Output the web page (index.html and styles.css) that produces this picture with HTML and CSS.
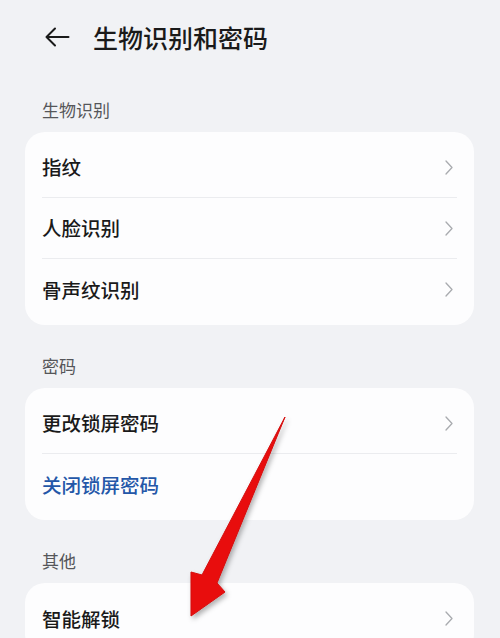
FILE: index.html
```html
<!DOCTYPE html>
<html lang="zh-CN">
<head>
<meta charset="utf-8">
<title>生物识别和密码</title>
<link rel="stylesheet" href="styles.css">
</head>
<body>
<div class="page">
  <header class="header">
    <svg class="back" width="26" height="20" viewBox="0 0 26 20">
      <path d="M11 1.5 L2.5 10 L11 18.5 M2.5 10 H24.5" fill="none" stroke="#1a1a1a" stroke-width="2" stroke-linecap="round" stroke-linejoin="round"/>
    </svg>
    <h1 class="title">生物识别和密码</h1>
  </header>

  <div class="section-label">生物识别</div>
  <div class="card">
    <div class="row"><span class="row-text">指纹</span><svg class="chev" width="8" height="15" viewBox="0 0 8 15"><path d="M1 1 L7 7.5 L1 14" fill="none" stroke="#a9abaf" stroke-width="1.3" stroke-linecap="round" stroke-linejoin="round"/></svg></div>
    <div class="row"><span class="row-text">人脸识别</span><svg class="chev" width="8" height="15" viewBox="0 0 8 15"><path d="M1 1 L7 7.5 L1 14" fill="none" stroke="#a9abaf" stroke-width="1.3" stroke-linecap="round" stroke-linejoin="round"/></svg></div>
    <div class="row"><span class="row-text">骨声纹识别</span><svg class="chev" width="8" height="15" viewBox="0 0 8 15"><path d="M1 1 L7 7.5 L1 14" fill="none" stroke="#a9abaf" stroke-width="1.3" stroke-linecap="round" stroke-linejoin="round"/></svg></div>
  </div>

  <div class="section-label">密码</div>
  <div class="card">
    <div class="row"><span class="row-text">更改锁屏密码</span><svg class="chev" width="8" height="15" viewBox="0 0 8 15"><path d="M1 1 L7 7.5 L1 14" fill="none" stroke="#a9abaf" stroke-width="1.3" stroke-linecap="round" stroke-linejoin="round"/></svg></div>
    <div class="row"><span class="row-text blue">关闭锁屏密码</span></div>
  </div>

  <div class="section-label">其他</div>
  <div class="card">
    <div class="row"><span class="row-text">智能解锁</span><svg class="chev" width="8" height="15" viewBox="0 0 8 15"><path d="M1 1 L7 7.5 L1 14" fill="none" stroke="#a9abaf" stroke-width="1.3" stroke-linecap="round" stroke-linejoin="round"/></svg></div>
  </div>

  <svg class="red-arrow" width="500" height="638" viewBox="0 0 500 638">
    <defs>
      <filter id="sh" x="-20%" y="-20%" width="140%" height="140%">
        <feDropShadow dx="2" dy="3" stdDeviation="2.5" flood-color="#000" flood-opacity="0.3"/>
      </filter>
    </defs>
    <path d="M285 417 L217 583 L225 592 L191 616 L191 572 L202 575 Z" fill="#e81010" stroke="#d40a0a" stroke-width="1" stroke-linejoin="round" filter="url(#sh)"/>
  </svg>
</div>
</body>
</html>
```

FILE: styles.css
```css
* { box-sizing: border-box; }
html, body {
  margin: 0;
  padding: 0;
  background: #f1f2f5;
}
body {
  width: 500px;
  height: 638px;
  overflow: hidden;
  font-family: "Noto Sans CJK SC", "Noto Sans", sans-serif;
  color: #1a1a1a;
}
.page {
  position: relative;
  width: 500px;
  height: 638px;
}
.header {
  height: 74px;
  display: flex;
  align-items: center;
  padding-left: 44px;
}
.back {
  display: block;
  margin-right: 23px;
}
.title {
  margin: 0;
  font-size: 25px;
  font-weight: 500;
  line-height: 30px;
  color: #1a1a1a;
}
.section-label {
  padding: 25px 42px 0;
  font-size: 17px;
  line-height: 22px;
  color: #555659;
  margin-bottom: 11px;
}
.card {
  margin: 0 26px 5px 25px;
  background: #fdfdfe;
  border-radius: 20px;
  padding: 5px 17px;
}
.row {
  height: 61px;
  display: flex;
  align-items: center;
  justify-content: space-between;
  border-bottom: 1px solid #ebecef;
}
.row:last-child {
  border-bottom: none;
}
.row-text {
  font-size: 19.5px;
  font-weight: 500;
  line-height: 26px;
  color: #1a1a1a;
}
.row-text.blue {
  color: #2457a8;
}
.chev {
  display: block;
  margin-right: 4px;
}
.red-arrow {
  position: absolute;
  left: 0;
  top: 0;
  pointer-events: none;
}
```
